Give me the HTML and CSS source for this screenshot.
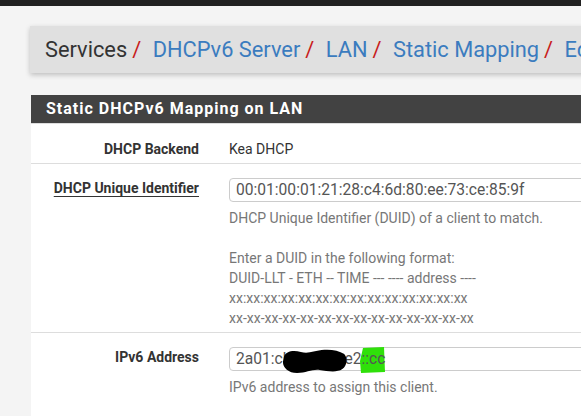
FILE: index.html
```html
<!DOCTYPE html>
<html lang="en">
<head>
<meta charset="utf-8">
<title>Services / DHCPv6 Server / LAN / Static Mapping / Edit</title>
<link rel="stylesheet" href="styles.css">
</head>
<body>
<div class="topbar"></div>
<main class="page">
  <header class="crumbs">
    <h1 class="crumbs-title"><span class="crumb-plain">Services</span><span class="sep">/</span><a class="crumb-link" href="#">DHCPv6 Server</a><span class="sep">/</span><a class="crumb-link" href="#">LAN</a><span class="sep">/</span><a class="crumb-link" href="#">Static Mapping</a><span class="sep">/</span><a class="crumb-link" href="#">Edit</a></h1>
  </header>

  <section class="panel">
    <h2 class="panel-title">Static DHCPv6 Mapping on LAN</h2>
    <div class="panel-body">
      <div class="row row-first">
        <div class="label-col"><span class="label">DHCP Backend</span></div>
        <div class="value-col"><span class="static-value">Kea DHCP</span></div>
      </div>

      <div class="row">
        <div class="label-col"><span class="label label-req">DHCP Unique Identifier</span></div>
        <div class="value-col">
          <div class="field">00:01:00:01:21:28:c4:6d:80:ee:73:ce:85:9f</div>
          <div class="help">
            <div>DHCP Unique Identifier (DUID) of a client to match.</div>
            <div class="blank">&nbsp;</div>
            <div>Enter a DUID in the following format:</div>
            <div>DUID-LLT - ETH -- TIME --- ---- address ----</div>
            <div>xx:xx:xx:xx:xx:xx:xx:xx:xx:xx:xx:xx:xx:xx</div>
            <div>xx-xx-xx-xx-xx-xx-xx-xx-xx-xx-xx-xx-xx-xx</div>
          </div>
        </div>
      </div>

      <div class="row row-last">
        <div class="label-col"><span class="label">IPv6 Address</span></div>
        <div class="value-col">
          <div class="field field-addr">
            <span>2a01:cb</span><span class="gap"></span><span>e2</span><span class="hl">::cc</span>
            <svg class="hl-mark" width="26" height="26" viewBox="0 0 26 26"><path d="M3 1 L24 0 L25 25 L1 26 L0 14 Z" fill="#2fe00a"/></svg>
            <svg class="blob" width="66" height="26" viewBox="0 0 70 26" preserveAspectRatio="none"><path d="M2 9 C4 3 12 2 20 4 C28 6 34 3 42 2 C50 1 60 2 66 6 C70 10 69 18 64 21 C58 25 48 23 40 22 C32 21 26 25 16 25 C7 25 1 20 1 14 Z" fill="#000"/></svg>
          </div>
          <div class="help">
            <div>IPv6 address to assign this client.</div>
          </div>
        </div>
      </div>
    </div>
  </section>
</main>
</body>
</html>
```

FILE: styles.css
```css
html, body {
  margin: 0;
  padding: 0;
  overflow: hidden;
}
body {
  background: #f4f4f4;
  font-family: Roboto, "Liberation Sans", sans-serif;
  color: #333;
  width: 1200px;
}
.topbar {
  height: 6px;
  background: #212121;
}
.page {
  padding: 20px 0 0 30px;
}
.crumbs {
  background: #e0e0e0;
  height: 47px;
  box-shadow: 0 2px 5px rgba(0, 0, 0, 0.22);
  display: flex;
  align-items: center;
  padding-left: 15px;
}
.crumbs-title {
  margin: 0;
  font-size: 21.8px;
  font-weight: 400;
  line-height: 24px;
  white-space: nowrap;
}
.crumb-plain {
  color: #333;
}
.crumb-link {
  color: #3b7cbf;
  text-decoration: none;
}
.sep {
  color: #c81c1c;
  margin: 0 11.5px 0 5px;
}
.panel {
  margin: 22px 0 0 1px;
  background: #fff;
  padding-bottom: 60px;
}
.panel-title {
  margin: 0;
  background: #424242;
  color: #fff;
  font-size: 16px;
  font-weight: 700;
  letter-spacing: 1px;
  height: 28px;
  line-height: 28px;
  padding-left: 15px;
  border-bottom: 1px solid #ddd;
}
.row {
  display: flex;
  padding: 14px 0 4px;
  border-top: 1px solid #ddd;
}
.row-first {
  border-top: 0;
  padding-top: 15px;
}
.label-col {
  width: 183px;
  box-sizing: border-box;
  padding-right: 15px;
  text-align: right;
  flex: none;
}
.label {
  font-size: 14px;
  font-weight: 700;
  line-height: 20px;
  color: #333;
}
.label-req {
  text-decoration: underline;
  text-underline-offset: 3px;
}
.value-col {
  flex: 1;
  padding-left: 15px;
}
.static-value {
  font-size: 14px;
  line-height: 20px;
  color: #333;
}
.field {
  position: relative;
  height: 24px;
  box-sizing: border-box;
  border: 1px solid #ccc;
  border-radius: 4px;
  padding: 0 6px;
  font-size: 15.6px;
  line-height: 22px;
  color: #555;
  white-space: nowrap;
}
.help {
  margin-top: 6px;
  font-size: 14px;
  line-height: 20px;
  color: #777;
}
.gap {
  display: inline-block;
  width: 53px;
}
.hl {
  position: relative;
  z-index: 1;
}
.hl-mark {
  position: absolute;
  left: 130px;
  top: -1px;
}
.blob {
  position: absolute;
  left: 52px;
  top: 0;
}
```
